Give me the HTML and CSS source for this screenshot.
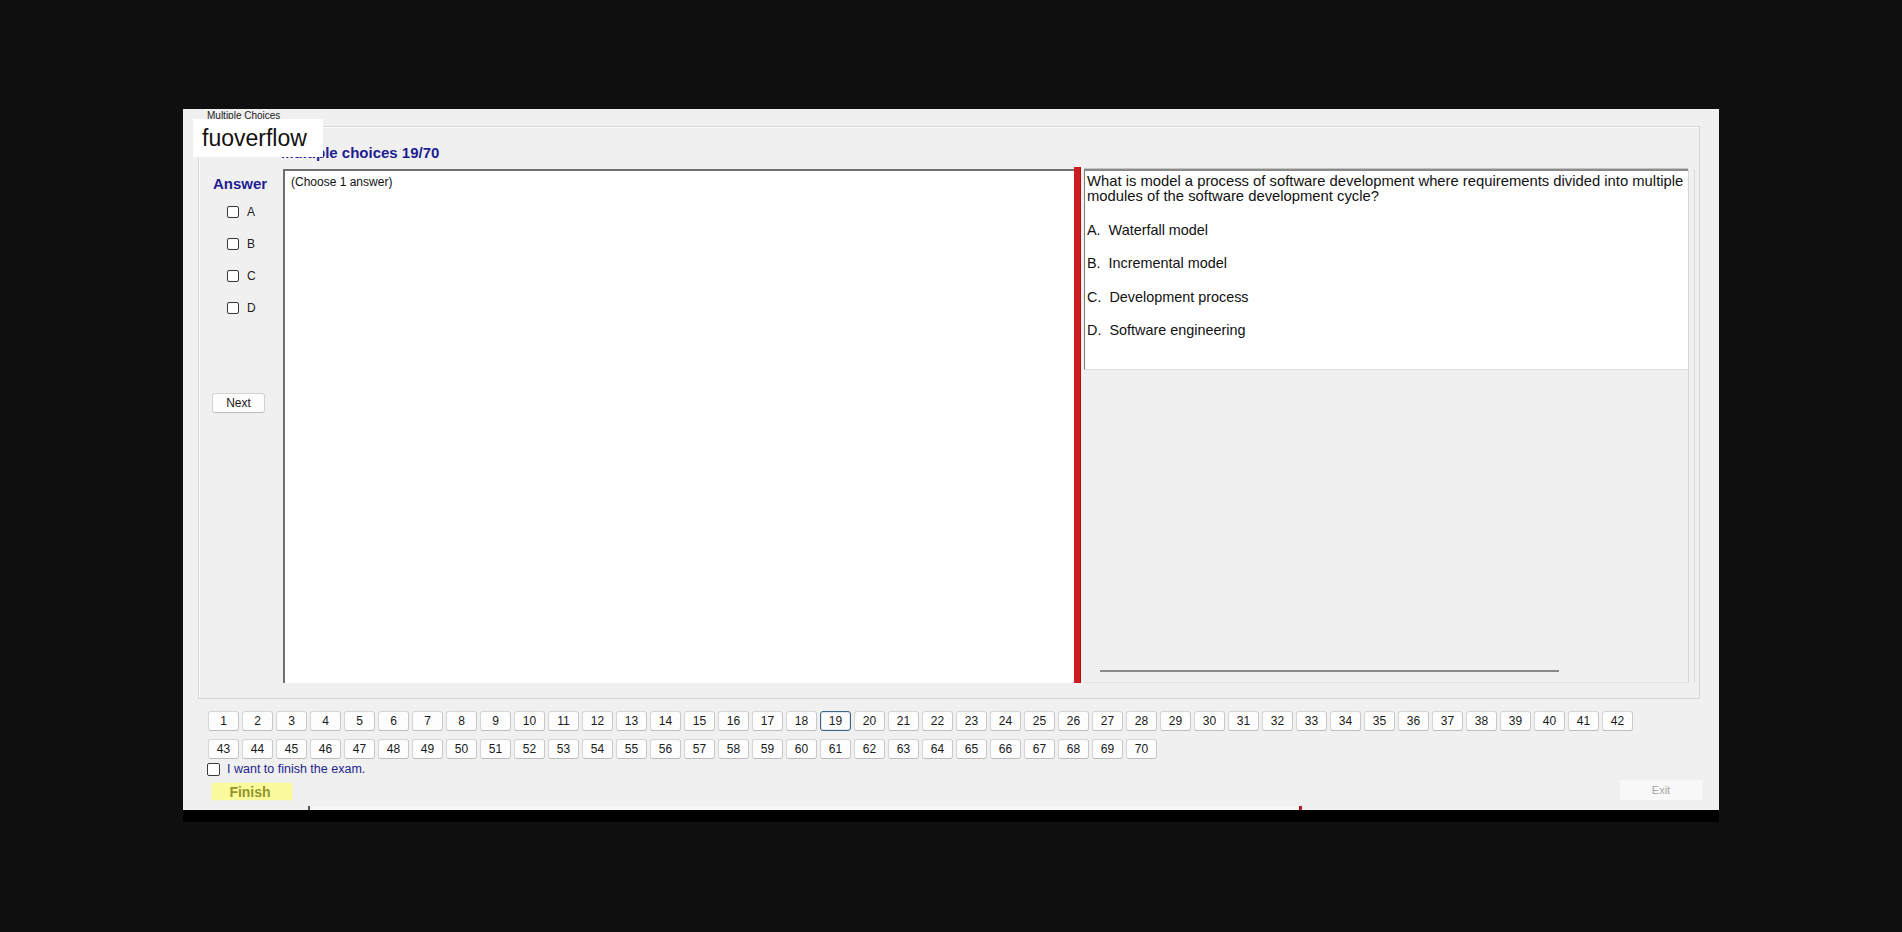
FILE: index.html
```html
<!DOCTYPE html>
<html lang="en">
<head>
<meta charset="utf-8">
<title>Multiple Choices</title>
<link rel="stylesheet" href="styles.css">
</head>
<body>
<div class="stage">
  <div class="window">
    <div class="title">Multiple Choices</div>
    <div class="group">
      <div class="heading">Multiple choices 19/70</div>
      <div class="main">
        <div class="answer-col">
          <div class="answer-label">Answer</div>
          <label class="opt"><input type="checkbox" class="cb"><span>A</span></label>
          <label class="opt"><input type="checkbox" class="cb"><span>B</span></label>
          <label class="opt"><input type="checkbox" class="cb"><span>C</span></label>
          <label class="opt"><input type="checkbox" class="cb"><span>D</span></label>
          <button class="next">Next</button>
        </div>
        <div class="textarea">(Choose 1 answer)</div>
        <div class="splitter"></div>
        <div class="qpanel">
          <div class="qbox">
            <div class="qline">What is model a process of software development where requirements divided into multiple standalone</div>
            <div class="qline">modules of the software development cycle?</div>
            <div class="qopt">A.  Waterfall model</div>
            <div class="qopt">B.  Incremental model</div>
            <div class="qopt">C.  Development process</div>
            <div class="qopt">D.  Software engineering</div>
          </div>
          <div class="qfoot"><div class="hline"></div></div>
        </div>
        <div class="vscroll"></div>
      </div>
    </div>
    <div class="nav">
      <button class="qn">1</button><button class="qn">2</button><button class="qn">3</button><button class="qn">4</button><button class="qn">5</button><button class="qn">6</button><button class="qn">7</button><button class="qn">8</button><button class="qn">9</button><button class="qn">10</button><button class="qn">11</button><button class="qn">12</button><button class="qn">13</button><button class="qn">14</button><button class="qn">15</button><button class="qn">16</button><button class="qn">17</button><button class="qn">18</button><button class="qn qn-active">19</button><button class="qn">20</button><button class="qn">21</button><button class="qn">22</button><button class="qn">23</button><button class="qn">24</button><button class="qn">25</button><button class="qn">26</button><button class="qn">27</button><button class="qn">28</button><button class="qn">29</button><button class="qn">30</button><button class="qn">31</button><button class="qn">32</button><button class="qn">33</button><button class="qn">34</button><button class="qn">35</button><button class="qn">36</button><button class="qn">37</button><button class="qn">38</button><button class="qn">39</button><button class="qn">40</button><button class="qn">41</button><button class="qn">42</button>
      <button class="qn">43</button><button class="qn">44</button><button class="qn">45</button><button class="qn">46</button><button class="qn">47</button><button class="qn">48</button><button class="qn">49</button><button class="qn">50</button><button class="qn">51</button><button class="qn">52</button><button class="qn">53</button><button class="qn">54</button><button class="qn">55</button><button class="qn">56</button><button class="qn">57</button><button class="qn">58</button><button class="qn">59</button><button class="qn">60</button><button class="qn">61</button><button class="qn">62</button><button class="qn">63</button><button class="qn">64</button><button class="qn">65</button><button class="qn">66</button><button class="qn">67</button><button class="qn">68</button><button class="qn">69</button><button class="qn">70</button>
    </div>
    <label class="finish-check"><input type="checkbox" class="cb cb-lg"><span>I want to finish the exam.</span></label>
    <div class="bottom">
      <button class="finish">Finish</button>
      <button class="exit">Exit</button>
    </div>
    <div class="edge"><span class="tick"></span><span class="redmark"></span></div>
    <div class="watermark">fuoverflow</div>
  </div>
  <div class="under"></div>
</div>
</body>
</html>
```
FILE: styles.css
```css
html, body {
  margin: 0;
  padding: 0;
}
body {
  background: #0f0f0f;
  font-family: "Liberation Sans", Arial, sans-serif;
  width: 1902px;
  height: 932px;
  overflow: hidden;
}
.stage {
  padding: 109px 0 0 183px;
}
.window {
  position: relative;
  width: 1536px;
  height: 701px;
  background: #f0f0f0;
  overflow: hidden;
  display: flex;
  flex-direction: column;
}
.title {
  font-size: 10px;
  line-height: 12px;
  color: #222;
  padding: 1px 0 0 24px;
  height: 12px;
}
.group {
  margin: 4px 0 0 15px;
  width: 1502px;
  box-sizing: border-box;
  border: 1px solid #d6d6d6;
  box-shadow: inset 1px 1px 0 #fafafa;
  padding-bottom: 15px;
}
.heading {
  padding: 17px 0 0 82px;
  margin-bottom: 7px;
  font-size: 15px;
  line-height: 18px;
  height: 18px;
  font-weight: bold;
  color: #1e1e92;
}
.main {
  display: flex;
  height: 514px;
}
.answer-col {
  width: 84px;
  flex: none;
  box-sizing: border-box;
  padding-left: 14px;
  display: flex;
  flex-direction: column;
  align-items: flex-start;
}
.answer-label {
  margin-top: 6px;
  font-size: 15px;
  line-height: 17px;
  font-weight: bold;
  color: #1e1e92;
}
.opt {
  display: flex;
  align-items: center;
  height: 12px;
  margin: 20px 0 0 14px;
  font-size: 12px;
  color: #222;
}
.answer-label + .opt {
  margin-top: 14px;
}
.opt span {
  margin-left: 8px;
  line-height: 12px;
}
.cb {
  appearance: none;
  -webkit-appearance: none;
  width: 12px;
  height: 12px;
  margin: 0;
  box-sizing: border-box;
  border: 1px solid #3a3a3a;
  border-radius: 2px;
  background: #fff;
  flex: none;
}
.cb-lg {
  width: 13px;
  height: 13px;
}
.next {
  margin: 79px 0 0 -1px;
  width: 53px;
  height: 20px;
  box-sizing: border-box;
  background: #fdfdfd;
  border: 1px solid #d2d2d2;
  border-bottom-color: #bdbdbd;
  border-radius: 3px;
  font-family: "Liberation Sans", Arial, sans-serif;
  font-size: 12px;
  color: #1a1a1a;
  padding: 0;
}
.textarea {
  width: 791px;
  flex: none;
  box-sizing: border-box;
  background: #fff;
  border-left: 2px solid #707070;
  border-top: 2px solid #707070;
  padding: 4px 0 0 6px;
  font-size: 12px;
  line-height: 14px;
  color: #111;
}
.splitter {
  width: 7px;
  flex: none;
  background: #cf1c1f;
  box-shadow: inset -1px 0 0 #a81215;
  margin-top: -2px;
}
.qpanel {
  width: 608px;
  flex: none;
  box-sizing: border-box;
  padding-left: 3px;
  border-right: 1px solid #d8d8d8;
  display: flex;
  flex-direction: column;
}
.qbox {
  height: 201px;
  box-sizing: border-box;
  background: #fff;
  border-left: 1px solid #7c7c7c;
  border-top: 2px solid #8a8a8a;
  border-bottom: 1px solid #dcdcdc;
  box-shadow: 0 -1px 0 #c4c4c4;
  padding: 3px 0 0 2px;
  overflow: hidden;
  color: #111;
}
.qline {
  font-size: 14.8px;
  line-height: 15px;
  white-space: nowrap;
}
.qopt {
  font-size: 14.4px;
  line-height: 15px;
  margin-top: 18.5px;
  white-space: pre;
}
.qfoot {
  flex: 1;
  display: flex;
  align-items: flex-end;
  padding: 0 0 10px 16px;
  border-bottom: 1px solid #e2e2e2;
}
.hline {
  width: 459px;
  height: 2px;
  background: #8a8a8a;
}
.vscroll {
  width: 5px;
  flex: none;
  border-right: 1px solid #dcdcdc;
}
.nav {
  margin-top: 12px;
  padding-left: 25px;
  display: flex;
  flex-wrap: wrap;
  column-gap: 3px;
  row-gap: 8px;
  width: 1450px;
}
.qn {
  width: 31px;
  height: 20px;
  box-sizing: border-box;
  padding: 0;
  background: #fdfdfd;
  border: 1px solid #d6d6d6;
  border-bottom-color: #bcbcbc;
  border-right-color: #c8c8c8;
  border-radius: 3px;
  font-family: "Liberation Sans", Arial, sans-serif;
  font-size: 12px;
  color: #1a1a1a;
}
.qn-active {
  border: 1px solid #3d6682;
  box-shadow: inset 0 0 0 1px #dfe9f1;
}
.finish-check {
  display: flex;
  align-items: center;
  margin-top: 4px;
  padding-left: 24px;
  height: 13px;
  font-size: 12.5px;
  color: #24248c;
}
.finish-check span {
  margin-left: 7px;
  line-height: 13px;
}
.bottom {
  margin-top: 4px;
  height: 21px;
  display: flex;
  justify-content: space-between;
  align-items: flex-start;
  padding: 0 17px 0 29px;
}
.finish {
  margin-top: 3px;
  width: 80px;
  height: 17px;
  padding: 0 4px 0 0;
  border: none;
  background: #fbfb9e;
  box-shadow: 0 0 2px #f4f4b8;
  font-family: "Liberation Sans", Arial, sans-serif;
  font-size: 14px;
  font-weight: bold;
  color: #94942a;
}
.exit {
  width: 82px;
  height: 20px;
  padding: 0;
  border: none;
  background: #f8f8f8;
  font-family: "Liberation Sans", Arial, sans-serif;
  font-size: 11px;
  color: #a6a6a6;
}
.edge {
  margin: 5px 0 0 125px;
  width: 994px;
  height: 4px;
  background: #f7f7f7;
  display: flex;
  justify-content: space-between;
}
.tick {
  width: 2px;
  height: 4px;
  background: #555;
}
.redmark {
  width: 3px;
  height: 4px;
  background: #b01a1a;
}
.watermark {
  position: absolute;
  left: 10px;
  top: 10px;
  width: 130px;
  height: 38px;
  box-sizing: border-box;
  padding-left: 9px;
  background: #fff;
  font-size: 23px;
  line-height: 38px;
  color: #111;
}
.under {
  width: 1536px;
  height: 12px;
  background: #000;
}
```
